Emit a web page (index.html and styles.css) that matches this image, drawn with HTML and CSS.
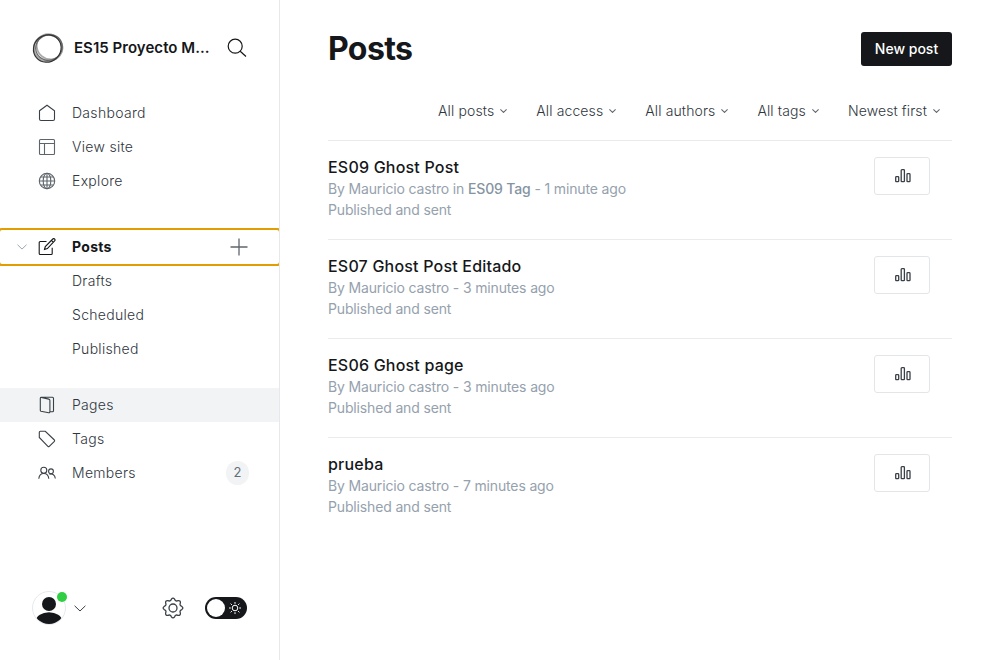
FILE: index.html
```html
<!DOCTYPE html>
<html lang="en">
<head>
<meta charset="utf-8">
<title>Posts</title>
<link rel="stylesheet" href="styles.css">
</head>
<body>
<svg class="sprite" aria-hidden="true">
  <symbol id="chevron" viewBox="0 0 12 7"><path d="M.6.8 6 6 11.4.8"/></symbol>
  <symbol id="bars" viewBox="0 0 16 14"><rect x=".7" y="7.7" width="3" height="5"  rx=".7"/><rect x="6.2" y=".7" width="3.2" height="12" rx=".7"/><rect x="12" y="4.7" width="3" height="8" rx=".7"/></symbol>
</svg>
<div class="app">
  <aside class="sidebar">
    <header class="brand">
      <svg class="brand-logo" viewBox="0 0 32 32"><ellipse class="ring light" cx="17.6" cy="14.8" rx="13.4" ry="12.2" transform="rotate(40 17.6 14.8)"/><ellipse class="ring light" cx="16" cy="16" rx="14" ry="13.2"/><ellipse class="ring mid" cx="17" cy="15.5" rx="13.5" ry="12.6" transform="rotate(-28 17 15.5)"/><ellipse class="ring dark" cx="15.3" cy="16.5" rx="14.2" ry="13.3" transform="rotate(-40 15.3 16.5)"/></svg>
      <span class="brand-name">ES15 Proyecto M...</span>
      <svg class="search" viewBox="0 0 20 20"><circle cx="8.2" cy="8.2" r="7"/><path d="m13.2 13.2 5.8 5.3"/></svg>
    </header>
    <nav class="nav">
      <ul class="group">
        <li class="item"><svg class="icon" viewBox="0 0 18 18"><path d="M1.5 6.7 9 1.2l7.5 5.5v8.3a1.5 1.5 0 0 1-1.5 1.5H3A1.5 1.5 0 0 1 1.5 15Z"/></svg><span>Dashboard</span></li>
        <li class="item"><svg class="icon soft" viewBox="0 0 18 18"><rect x="1.5" y="1.5" width="15" height="15" rx="1"/><path d="M1.5 5.5h15M6.5 5.5v11"/></svg><span>View site</span></li>
        <li class="item"><svg class="icon soft" viewBox="0 0 18 18"><circle cx="9" cy="9" r="7.7"/><ellipse cx="9" cy="9" rx="3.8" ry="7.7"/><path d="M9 1.3v15.4M1.3 9h15.4M2.6 5h12.8M2.6 13h12.8"/></svg><span>Explore</span></li>
      </ul>
      <ul class="group">
        <li class="item active"><svg class="expand"><use href="#chevron"/></svg><svg class="icon" viewBox="0 0 18 18"><path d="M8.5 3.5H2.2a1 1 0 0 0-1 1v11a1 1 0 0 0 1 1h11a1 1 0 0 0 1-1V9.7M6.5 11.5l.8-3L14.8 1a1.2 1.2 0 0 1 1.8 1.8L9.4 10.6ZM13.4 2.4l2 1.9"/></svg><span>Posts</span><svg class="plus" viewBox="0 0 18 18"><path d="M9 .5v17M.5 9h17"/></svg></li>
        <li class="item"><span>Drafts</span></li>
        <li class="item"><span>Scheduled</span></li>
        <li class="item"><span>Published</span></li>
      </ul>
      <ul class="group">
        <li class="item hover"><svg class="icon" viewBox="0 0 18 18"><path d="M2.3 2.2A1 1 0 0 1 3.3 1.3H14.5a1 1 0 0 1 1 1v12.4a1 1 0 0 1-1 1H12M3.3 1.4l7.5 1.7a1.4 1.4 0 0 1 1.1 1.4v11.2a1 1 0 0 1-1.2 1L3 15.2a1 1 0 0 1-.7-1V2.2"/></svg><span>Pages</span></li>
        <li class="item"><svg class="icon" viewBox="0 0 18 18"><path d="M1.3 2.3a1 1 0 0 1 1-1h5L16.4 10a1 1 0 0 1 0 1.3l-5.1 5a1 1 0 0 1-1.4 0L1.3 7.5Z"/></svg><span>Tags</span></li>
        <li class="item"><svg class="icon" viewBox="0 0 18 18"><circle cx="5.8" cy="6.2" r="3"/><path d="M.8 14.7c.3-3.6 2.1-5.2 5-5.2s4.7 1.6 5 5.2"/><circle cx="13" cy="7.3" r="2.4"/><path d="M11.4 10.3c3.2-.9 5.6.6 5.9 4.2"/></svg><span>Members</span><b class="count">2</b></li>
      </ul>
    </nav>
    <footer class="foot">
      <div class="avatar"><svg viewBox="0 0 34 34"><defs><clipPath id="round"><circle cx="17" cy="17" r="16"/></clipPath></defs><circle class="frame" cx="17" cy="17" r="16.5"/><g clip-path="url(#round)"><circle cx="17" cy="13" r="7"/><ellipse cx="17" cy="30" rx="13" ry="8.7"/></g></svg><i class="dot"></i></div>
      <svg class="user-arrow"><use href="#chevron"/></svg>
      <svg class="gear" viewBox="0 0 22 22"><circle cx="11" cy="11" r="4"/><path d="M9.4 2.2Q11 .1 12.6 2.2C13.2 4 14.5 4.4 16 3.6Q18.6 3.3 18.4 6C17.6 7.5 18 8.8 19.8 9.4Q21.9 11 19.8 12.6C18 13.2 17.6 14.5 18.4 16Q18.6 18.7 16 18.4C14.5 17.6 13.2 18 12.6 19.8Q11 21.9 9.4 19.8C8.8 18 7.5 17.6 6 18.4Q3.4 18.7 3.6 16C4.4 14.5 4 13.2 2.2 12.6Q.1 11 2.2 9.4C4 8.8 4.4 7.5 3.6 6Q3.4 3.3 6 3.6C7.5 4.4 8.8 4 9.4 2.2Z"/></svg>
      <div class="toggle"><i class="knob"></i><svg viewBox="0 0 14 14"><circle cx="7" cy="7" r="2.8"/><path d="M7 1v1.8M7 11.2V13M1 7h1.8M11.2 7H13M2.6 2.6l1.3 1.3M10.1 10.1l1.3 1.3M2.6 11.4l1.3-1.3M10.1 3.9l1.3-1.3"/></svg></div>
    </footer>
  </aside>
  <main class="main">
    <header class="top"><h1>Posts</h1><button class="new">New post</button></header>
    <div class="filters">
      <span class="filter">All posts<svg><use href="#chevron"/></svg></span>
      <span class="filter">All access<svg><use href="#chevron"/></svg></span>
      <span class="filter">All authors<svg><use href="#chevron"/></svg></span>
      <span class="filter">All tags<svg><use href="#chevron"/></svg></span>
      <span class="filter">Newest first<svg><use href="#chevron"/></svg></span>
    </div>
    <ol class="list">
      <li class="post"><div><h3>ES09 Ghost Post</h3><p>By Mauricio castro in <b>ES09 Tag</b> - 1 minute ago</p><p>Published and sent</p></div><a class="stats"><svg><use href="#bars"/></svg></a></li>
      <li class="post"><div><h3>ES07 Ghost Post Editado</h3><p>By Mauricio castro - 3 minutes ago</p><p>Published and sent</p></div><a class="stats"><svg><use href="#bars"/></svg></a></li>
      <li class="post"><div><h3>ES06 Ghost page</h3><p>By Mauricio castro - 3 minutes ago</p><p>Published and sent</p></div><a class="stats"><svg><use href="#bars"/></svg></a></li>
      <li class="post"><div><h3>prueba</h3><p>By Mauricio castro - 7 minutes ago</p><p>Published and sent</p></div><a class="stats"><svg><use href="#bars"/></svg></a></li>
    </ol>
  </main>
</div>
</body>
</html>
```
FILE: styles.css
```css
* { box-sizing: border-box; }
body { margin: 0; background: #fff; color: #15171a; font-family: Inter, "Liberation Sans", sans-serif; }
h1, h3, p, ul, ol { margin: 0; padding: 0; list-style: none; }
svg { fill: none; stroke: currentColor; flex: none; display: block; }
.sprite { width: 0; height: 0; position: absolute; }
.app { display: flex; height: 660px; overflow: hidden; }

.sidebar { width: 280px; flex: none; border-right: 1px solid #e6e9eb; display: flex; flex-direction: column; overflow: hidden; }
.brand { display: flex; align-items: center; height: 32px; margin: 32px 32px 0; }
.brand-logo { width: 32px; height: 32px; }
.ring { stroke-width: 1.2; }
.dark { stroke: #333; }
.mid { stroke: #666; }
.light { stroke: #aaa; stroke-width: 1.8; }
.brand-name { margin-left: 10px; padding-bottom: 1px; width: 153px; font-size: 15px; font-weight: 600; letter-spacing: .04px; white-space: nowrap; }
.search { width: 20px; height: 20px; stroke-width: 1.2; }
.nav { flex: 1; padding-top: 32px; }
.group { margin-bottom: 32px; }
.group + .group { margin-bottom: 22px; }
.item { display: flex; align-items: center; height: 34px; padding-left: 72px; font-size: 14px; letter-spacing: .3px; color: #2f363d; font-weight: 300; }
.item span { padding-bottom: 1px; }
.icon { width: 18px; height: 18px; margin: 0 16px 0 -34px; stroke-width: 1.1; color: #394047; }
.soft { color: #5d646b; }
.active { color: #15171a; font-weight: 700; outline: 2px solid #e29d00; border-radius: 2px; }
.active .icon { margin-left: 0; margin-right: 16px; color: #15171a; }
.expand { width: 10px; height: 6px; margin: 0 11px 0 -55px; color: #8794a1; overflow: visible; }
.plus { width: 18px; height: 18px; margin-left: auto; margin-right: 31px; color: #60656b; stroke-width: 1.3; }
.hover { background: #f1f3f4; }
.count { margin-left: auto; margin-right: 30px; width: 23px; height: 24px; border-radius: 12px; background: #f1f3f4; color: #626d79; font-size: 13px; font-weight: 400; letter-spacing: 0; line-height: 23px; text-align: center; }
.foot { display: flex; align-items: center; height: 40px; margin: 0 32px 32px; }
.avatar { position: relative; }
.avatar svg { width: 34px; height: 34px; fill: #15171a; stroke: none; }
.avatar .frame { fill: #fff; stroke: #e6e9eb; }
.dot { position: absolute; right: -1px; top: 1px; width: 10px; height: 10px; border-radius: 50%; background: #30cf43; }
.user-arrow { width: 12px; height: 7px; margin-left: 8px; color: #394047; }
.gear { width: 22px; height: 22px; margin-left: auto; margin-right: 21px; color: #394047; stroke-width: 1.3; }
.toggle { display: flex; align-items: center; justify-content: space-between; width: 42px; height: 22px; padding: 0 5px 0 2px; border-radius: 11px; background: #15171a; color: #fff; }
.knob { width: 18px; height: 18px; border-radius: 50%; background: #fff; }
.toggle svg { width: 14px; height: 14px; }

.main { flex: 1; padding: 32px 48px 0; }
.top { display: flex; justify-content: space-between; align-items: center; height: 34px; }
h1 { font-size: 32px; font-weight: 700; line-height: 34px; letter-spacing: -.6px; }
.new { width: 91px; height: 34px; padding: 0 0 2px; border: 0; border-radius: 3px; background: #15171a; color: #fff; font: 500 14px Inter, sans-serif; }
.filters { display: flex; justify-content: flex-end; gap: 29px; height: 74px; padding: 32px 12px 0 0; }
.filter { display: flex; align-items: center; gap: 6px; height: 24px; font-size: 14px; font-weight: 300; letter-spacing: .12px; color: #2f363d; white-space: nowrap; }
.filter svg { width: 7px; height: 4px; margin-top: 1px; color: #60656b; stroke-width: 1.8; }
.post { display: flex; justify-content: space-between; height: 99px; padding: 16px 22px 0 0; border-top: 1px solid #e9ebed; }
h3 { margin-bottom: 1px; font-size: 16px; font-weight: 500; line-height: 20px; letter-spacing: .2px; }
.post p { font-size: 14px; line-height: 21px; letter-spacing: -.15px; color: #95a1ad; }
.post b { font-weight: 500; color: #8594a2; }
.stats { display: flex; align-items: center; justify-content: center; width: 56px; height: 38px; padding-left: 1px; border: 1px solid #e3e6e9; border-radius: 3px; color: #394047; }
.stats svg { width: 16px; height: 14px; stroke-width: 1.3; }
```
